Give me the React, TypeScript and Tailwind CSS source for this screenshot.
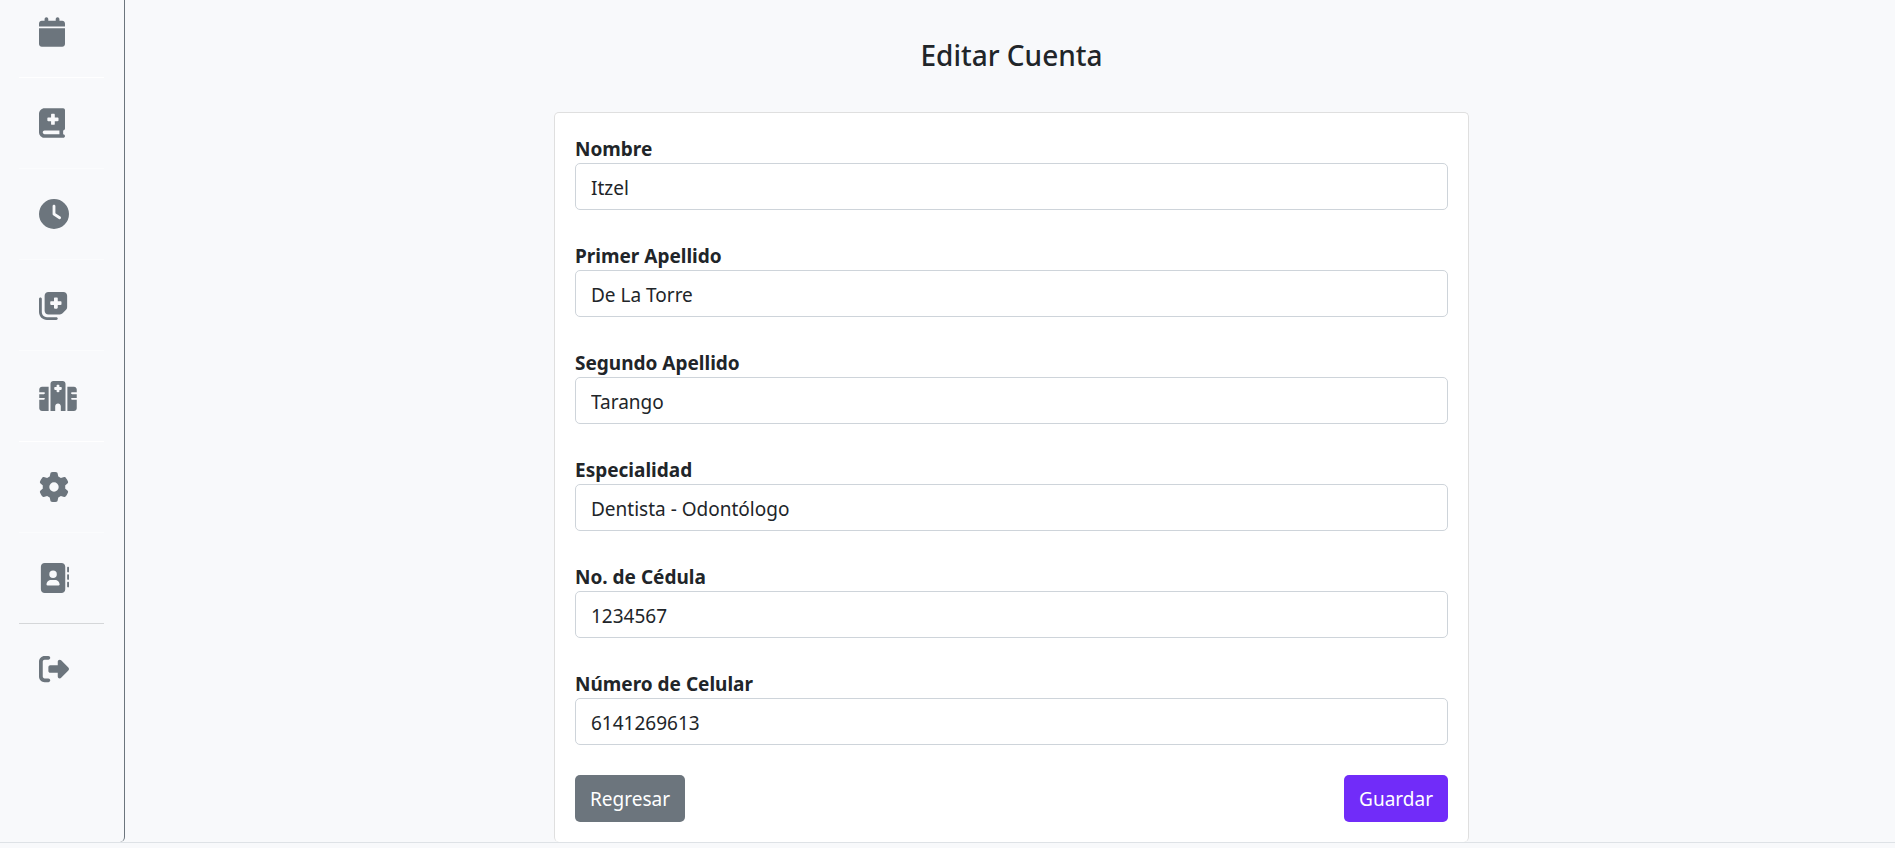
import { useState } from "react";
import type { IconType } from "react-icons";
import {
  FaAddressBook,
  FaBookMedical,
  FaCalendar,
  FaClock,
  FaGear,
  FaHospital,
  FaNotesMedical,
  FaRightFromBracket,
} from "react-icons/fa6";

type NavItem = { label: string; icon: IconType; width: string; divider: string };

const navItems: NavItem[] = [
  { label: "Calendario", icon: FaCalendar, width: "w-[26px]", divider: "border-white" },
  { label: "Expedientes", icon: FaBookMedical, width: "w-[26px]", divider: "border-[#fbfcfd]" },
  { label: "Horario", icon: FaClock, width: "w-[30px]", divider: "border-[#fbfcfd]" },
  { label: "Notas", icon: FaNotesMedical, width: "w-[30px]", divider: "border-[#fbfcfd]" },
  { label: "Clínicas", icon: FaHospital, width: "w-[38px]", divider: "border-white" },
  { label: "Configuración", icon: FaGear, width: "w-[30px]", divider: "border-[#fbfcfd]" },
  { label: "Cuenta", icon: FaAddressBook, width: "w-[30px]", divider: "border-[#d5d7d9]" },
  { label: "Salir", icon: FaRightFromBracket, width: "w-[30px]", divider: "border-transparent" },
];

const fields = [
  { id: "nombre", label: "Nombre", value: "Itzel" },
  { id: "primer-apellido", label: "Primer Apellido", value: "De La Torre" },
  { id: "segundo-apellido", label: "Segundo Apellido", value: "Tarango" },
  { id: "especialidad", label: "Especialidad", value: "Dentista - Odontólogo" },
  { id: "cedula", label: "No. de Cédula", value: "1234567" },
  { id: "celular", label: "Número de Celular", value: "6141269613" },
];

function Sidebar() {
  return (
    <nav className="w-[125px] shrink-0 rounded-br-[5px] border-r border-[#6c757d] pr-5 pl-[19px]">
      <ul>
        {navItems.map(({ label, icon: Icon, width, divider }) => (
          <li key={label} className={`group border-b ${divider}`}>
            <a
              href="#"
              aria-label={label}
              className="flex items-center py-[30px] pl-5 text-[#6c757d] group-first:pt-[17px]"
            >
              <Icon className={`h-[30px] ${width}`} />
            </a>
          </li>
        ))}
      </ul>
    </nav>
  );
}

function Field({ id, label, value }: { id: string; label: string; value: string }) {
  const [text, setText] = useState(value);
  return (
    <div className="flex flex-col">
      <label htmlFor={id} className="pt-0.5 text-[19px] leading-7 font-bold">
        {label}
      </label>
      <input
        id={id}
        value={text}
        onChange={(e) => setText(e.target.value)}
        className="h-[47px] w-full rounded-[5px] border border-[#ced4da] bg-white px-[15px] pt-0.5 text-[19px]"
      />
    </div>
  );
}

export default function App() {
  return (
    <div className="min-h-screen bg-[#f8f9fb] pb-[5px] font-['Noto_Sans',sans-serif] text-[#212529]">
      <div className="flex border-b border-[#dee2e6]">
        <Sidebar />
        <main className="flex grow flex-col items-center pl-[3px]">
          <h1 className="pt-[35px] pb-[37px] text-[28px] leading-10 font-medium">Editar Cuenta</h1>
          <form
            onSubmit={(e) => e.preventDefault()}
            className="w-full max-w-[915px] rounded-[5px] border border-b-0 border-[#dfdfdf] bg-white p-5"
          >
            <div className="flex flex-col gap-[30px]">
              {fields.map((f) => (
                <Field key={f.id} {...f} />
              ))}
            </div>
            <div className="mt-[30px] flex justify-between text-[19px] text-white">
              <button type="button" className="h-[47px] rounded-[5px] bg-[#6c757d] px-[15px] pt-0.5">
                Regresar
              </button>
              <button type="submit" className="h-[47px] rounded-[5px] bg-[#712cf9] px-[15px] pt-0.5">
                Guardar
              </button>
            </div>
          </form>
        </main>
      </div>
    </div>
  );
}
